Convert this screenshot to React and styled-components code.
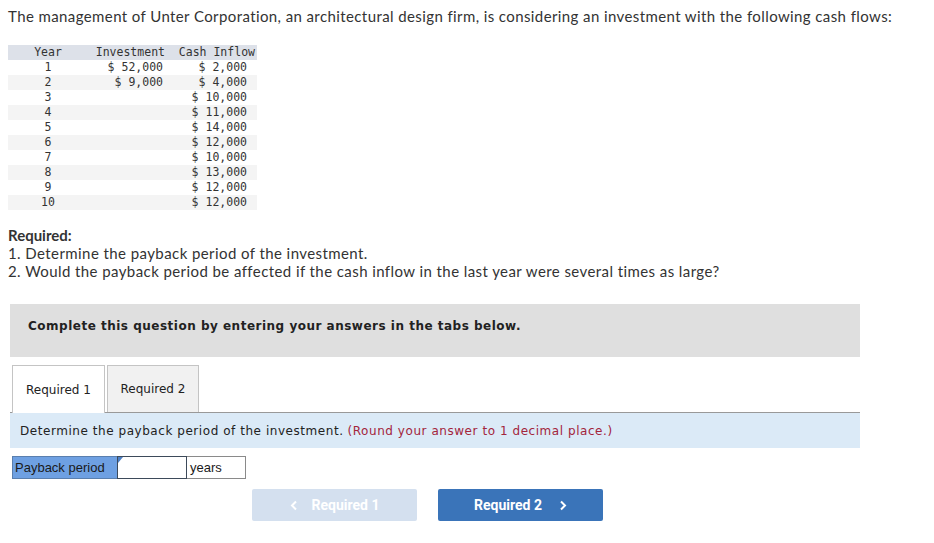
import React from "react";
import styled, { createGlobalStyle } from "styled-components";

const Global = createGlobalStyle`
  html, body { margin: 0; padding: 0; background: #fff; }
  body { font-family: Lato, "Open Sans", sans-serif; color: #333; }
`;

const Page = styled.div`
  padding: 7px 8px 0 8px;
  width: 934px;
  box-sizing: border-box;
`;

const Intro = styled.p`
  margin: 0;
  font-size: 15px;
  line-height: 18px;
  letter-spacing: 0.4px;
  color: #333;
`;

const Table = styled.table`
  margin-top: 20px;
  border-collapse: collapse;
  table-layout: fixed;
  font-family: "DejaVu Sans Mono", "Liberation Mono", monospace;
  font-size: 11.5px;
  color: #333;
`;

const Row = styled.tr`
  height: 15px;
  background: ${(p) => (p.$head ? "#dde1e9" : p.$alt ? "#f4f4f4" : "#fff")};
`;

const Cell = styled.td`
  box-sizing: border-box;
  padding: 0 ${(p) => p.$pr || 0}px 0 0;
  width: ${(p) => p.$w}px;
  text-align: ${(p) => p.$align || "right"};
  line-height: 15px;
  white-space: pre;
`;

const Required = styled.div`
  margin-top: 16px;
  font-size: 15px;
  line-height: 18px;
  letter-spacing: 0.42px;
`;

const Bold = styled.div`
  font-weight: 700;
  letter-spacing: 0;
`;

const Notice = styled.div`
  margin: 24px 0 0 2px;
  width: 850px;
  height: 53px;
  background: #dfdfdf;
  padding: 14px 0 0 18px;
  box-sizing: border-box;
  font-family: "DejaVu Sans", Verdana, sans-serif;
  font-weight: 700;
  font-size: 12px;
  line-height: 16px;
  letter-spacing: 0.5px;
  color: #222;
`;

const Tabs = styled.div`
  margin: 8px 0 0 2px;
  width: 850px;
  display: flex;
  gap: 2px;
  padding-left: 2px;
  box-sizing: border-box;
  border-bottom: 1px solid #999;
`;

const Tab = styled.div`
  width: ${(p) => (p.$active ? 93 : 92)}px;
  height: ${(p) => (p.$active ? 48 : 47)}px;
  margin-bottom: ${(p) => (p.$active ? "-1px" : "0")};
  box-sizing: border-box;
  border: 1px solid #c4c4c4;
  border-bottom: none;
  background: ${(p) => (p.$active ? "#fff" : "#f1f1f1")};
  display: flex;
  align-items: center;
  justify-content: center;
  font-family: "DejaVu Sans", Verdana, sans-serif;
  font-size: 12px;
  color: #222;
`;

const Instruction = styled.div`
  margin-left: 2px;
  width: 850px;
  height: 35px;
  background: #dbeaf7;
  display: flex;
  align-items: center;
  padding-left: 10px;
  box-sizing: border-box;
  font-family: "DejaVu Sans", Verdana, sans-serif;
  font-size: 12px;
  letter-spacing: 0.55px;
  color: #222;
`;

const Red = styled.span`
  color: #a3253c;
  margin-left: 4px;
`;

const AnswerRow = styled.div`
  margin: 8px 0 0 4px;
  display: flex;
  height: 23px;
`;

const Label = styled.div`
  width: 105px;
  box-sizing: border-box;
  background: #6ea0e2;
  border: 1px solid #5a7fae;
  border-right: none;
  display: flex;
  align-items: center;
  padding-left: 2px;
  font-family: "Liberation Sans", Arial, sans-serif;
  font-size: 13px;
  color: #1a1a1a;
`;

const InputWrap = styled.div`
  position: relative;
  width: 70px;
  box-sizing: border-box;
  border: 1px solid #3d4a5a;
  background: #fff;
`;

const Corner = styled.div`
  position: absolute;
  left: 0;
  top: 0;
  width: 0;
  height: 0;
  border-top: 6px solid #4d7fc4;
  border-right: 5px solid transparent;
`;

const Field = styled.input`
  width: 100%;
  height: 100%;
  border: none;
  outline: none;
  box-sizing: border-box;
  background: transparent;
`;

const Unit = styled.div`
  width: 59px;
  box-sizing: border-box;
  border: 1px solid #8a8a8a;
  border-left: none;
  display: flex;
  align-items: center;
  padding-left: 3px;
  font-family: "Liberation Sans", Arial, sans-serif;
  font-size: 13px;
  color: #1a1a1a;
`;

const Nav = styled.div`
  margin: 10px 0 0 244px;
  display: flex;
  gap: 21px;
`;

const NavButton = styled.button`
  width: 165px;
  height: 32px;
  border: none;
  border-radius: 2px;
  background: ${(p) => (p.disabled ? "#d4e0ef" : "#3a74b9")};
  color: #fff;
  font-family: Roboto, "Liberation Sans", sans-serif;
  font-weight: 700;
  font-size: 14px;
  display: flex;
  align-items: center;
  justify-content: center;
  gap: ${(p) => (p.disabled ? 14 : 17)}px;
  cursor: ${(p) => (p.disabled ? "default" : "pointer")};
  padding: 0;
`;

const Chevron = ({ dir }) => (
  <svg width="8" height="11" viewBox="0 0 8 11">
    <path
      d={dir === "left" ? "M6 1.5 L2 5.5 L6 9.5" : "M2 1.5 L6 5.5 L2 9.5"}
      fill="none"
      stroke="#fff"
      strokeWidth="2"
    />
  </svg>
);

const rows = [
  ["1", "$ 52,000", "$ 2,000"],
  ["2", "$ 9,000", "$ 4,000"],
  ["3", "", "$ 10,000"],
  ["4", "", "$ 11,000"],
  ["5", "", "$ 14,000"],
  ["6", "", "$ 12,000"],
  ["7", "", "$ 10,000"],
  ["8", "", "$ 13,000"],
  ["9", "", "$ 12,000"],
  ["10", "", "$ 12,000"],
];

export default function App() {
  return (
    <Page>
      <Global />
      <Intro>
        The management of Unter Corporation, an architectural design firm, is considering an
        investment with the following cash flows:
      </Intro>
      <Table>
        <colgroup>
          <col style={{ width: 80 }} />
          <col style={{ width: 80 }} />
          <col style={{ width: 89 }} />
        </colgroup>
        <tbody>
          <Row $head>
            <Cell $w={80} $align="center">Year</Cell>
            <Cell $w={80} $pr={3}>Investment</Cell>
            <Cell $w={89} $pr={2}>Cash Inflow</Cell>
          </Row>
          {rows.map((r, i) => (
            <Row key={r[0]} $alt={i % 2 === 1}>
              <Cell $w={80} $align="center">{r[0]}</Cell>
              <Cell $w={80} $pr={5}>{r[1]}</Cell>
              <Cell $w={89} $pr={10}>{r[2]}</Cell>
            </Row>
          ))}
        </tbody>
      </Table>
      <Required>
        <Bold>Required:</Bold>
        <div>1. Determine the payback period of the investment.</div>
        <div>
          2. Would the payback period be affected if the cash inflow in the last year were
          several times as large?
        </div>
      </Required>
      <Notice>Complete this question by entering your answers in the tabs below.</Notice>
      <Tabs>
        <Tab $active>Required 1</Tab>
        <Tab>Required 2</Tab>
      </Tabs>
      <Instruction>
        Determine the payback period of the investment.
        <Red>(Round your answer to 1 decimal place.)</Red>
      </Instruction>
      <AnswerRow>
        <Label>Payback period</Label>
        <InputWrap>
          <Corner />
          <Field type="text" aria-label="Payback period" />
        </InputWrap>
        <Unit>years</Unit>
      </AnswerRow>
      <Nav>
        <NavButton disabled>
          <Chevron dir="left" />
          Required 1
        </NavButton>
        <NavButton>
          Required 2
          <Chevron dir="right" />
        </NavButton>
      </Nav>
    </Page>
  );
}
